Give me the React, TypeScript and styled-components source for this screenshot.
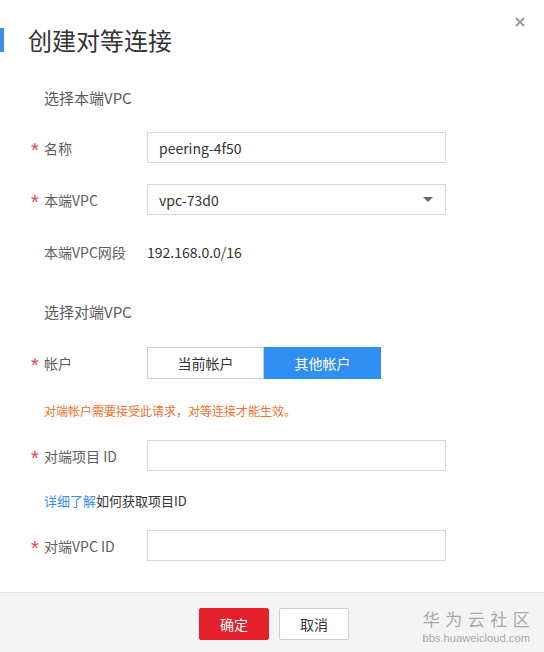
import React from "react";
import styled, { createGlobalStyle } from "styled-components";

const Global = createGlobalStyle`
  html, body { margin: 0; padding: 0; background: #fff; }
  body { font-family: "Noto Sans CJK SC", "Noto Sans", "Liberation Sans", sans-serif; }
  * { box-sizing: border-box; }
`;

const Page = styled.div`
  position: relative;
  width: 544px;
  height: 652px;
  display: flex;
  flex-direction: column;
  background: #fff;
  overflow: hidden;
`;

const Header = styled.div`
  display: flex;
  align-items: center;
  margin-top: 28px;
  height: 24px;
`;

const Bar = styled.div`
  width: 4px;
  height: 24px;
  background: #3a8ee6;
`;

const Title = styled.h1`
  margin: 0 0 0 24px;
  font-size: 24px;
  line-height: 24px;
  font-weight: 400;
  color: #333;
`;

const Close = styled.button`
  position: absolute;
  top: 14px;
  right: 16px;
  width: 16px;
  height: 16px;
  padding: 0;
  border: none;
  background: none;
  display: flex;
  align-items: center;
  justify-content: center;
`;

const Body = styled.div`
  display: flex;
  flex-direction: column;
  padding-left: 31px;
  flex: 1;
`;

const SectionTitle = styled.div<{ $mt: number }>`
  margin-top: ${(p) => p.$mt}px;
  padding-left: 13px;
  font-size: 15px;
  line-height: 20px;
  color: #5a5a5a;
`;

const Row = styled.div<{ $mt: number }>`
  margin-top: ${(p) => p.$mt}px;
  display: flex;
  align-items: center;
`;

const Label = styled.div`
  width: 116px;
  display: flex;
  align-items: center;
  font-size: 14px;
  line-height: 20px;
  color: #5e5e5e;
`;

const Star = styled.span<{ $show: boolean }>`
  width: 13px;
  height: 20px;
  padding-top: 2px;
  color: #e84545;
  font-family: "Liberation Sans", sans-serif;
  font-size: 20px;
  line-height: 20px;
  visibility: ${(p) => (p.$show ? "visible" : "hidden")};
`;

const Input = styled.div`
  width: 299px;
  height: 31px;
  border: 1px solid #d6d6d6;
  padding: 0 12px 0 11px;
  display: flex;
  align-items: center;
  justify-content: space-between;
  font-size: 14px;
  color: #333;
  background: #fff;
`;

const Value = styled.div`
  font-size: 14px;
  line-height: 20px;
  color: #333;
`;

const Toggle = styled.div`
  display: flex;
  height: 32px;
`;

const ToggleItem = styled.div<{ $active: boolean }>`
  width: 117px;
  height: 32px;
  display: flex;
  align-items: center;
  justify-content: center;
  font-size: 14px;
  color: ${(p) => (p.$active ? "#fff" : "#333")};
  background: ${(p) => (p.$active ? "#2f8ff2" : "#fff")};
  border: 1px solid ${(p) => (p.$active ? "#2f8ff2" : "#cfcfcf")};
`;

const Note = styled.div<{ $mt: number }>`
  margin-top: ${(p) => p.$mt}px;
  padding-left: 13px;
  font-size: 12px;
  line-height: 20px;
  color: #f0702a;
`;

const Help = styled.div<{ $mt: number }>`
  margin-top: ${(p) => p.$mt}px;
  padding-left: 13px;
  font-size: 13px;
  line-height: 20px;
  color: #333;
`;

const Link = styled.a`
  color: #3a8ee6;
  text-decoration: none;
`;

const Footer = styled.div`
  height: 60px;
  background: #f4f4f4;
  border-top: 1px solid #e6e6e6;
  display: flex;
  align-items: flex-start;
  padding: 15px 0 0 199px;
  gap: 10px;
`;

const Button = styled.button<{ $primary?: boolean }>`
  width: 70px;
  height: 32px;
  font-family: inherit;
  font-size: 14px;
  border: 1px solid ${(p) => (p.$primary ? "#e3202c" : "#cfcfcf")};
  background: ${(p) => (p.$primary ? "#e3202c" : "#fff")};
  color: ${(p) => (p.$primary ? "#fff" : "#333")};
  border-radius: 2px;
  padding: 0;
`;

const Watermark = styled.div`
  position: absolute;
  right: 14px;
  bottom: 7px;
  display: flex;
  flex-direction: column;
  align-items: center;
  color: #a8a8a8;
`;

const WmTitle = styled.div`
  font-size: 17px;
  line-height: 18px;
  letter-spacing: 5.5px;
  margin-right: -5.5px;
`;

const WmUrl = styled.div`
  font-family: "Liberation Sans", sans-serif;
  font-size: 11.2px;
  line-height: 14px;
  margin-top: 3px;
`;

export default function App() {
  return (
    <Page>
      <Global />
      <Header>
        <Bar />
        <Title>创建对等连接</Title>
      </Header>
      <Close aria-label="close">
        <svg width="10" height="10" viewBox="0 0 10 10">
          <path d="M1 1L9 9M9 1L1 9" stroke="#999" strokeWidth="2" />
        </svg>
      </Close>
      <Body>
        <SectionTitle $mt={36}>选择本端VPC</SectionTitle>
        <Row $mt={24}>
          <Label><Star $show>*</Star>名称</Label>
          <Input>peering-4f50</Input>
        </Row>
        <Row $mt={21}>
          <Label><Star $show>*</Star>本端VPC</Label>
          <Input>
            vpc-73d0
            <svg width="10" height="6" viewBox="0 0 10 6">
              <path d="M0 0H10L5 5Z" fill="#666" />
            </svg>
          </Input>
        </Row>
        <Row $mt={27}>
          <Label><Star $show={false}>*</Star>本端VPC网段</Label>
          <Value>192.168.0.0/16</Value>
        </Row>
        <SectionTitle $mt={40}>选择对端VPC</SectionTitle>
        <Row $mt={25}>
          <Label><Star $show>*</Star>帐户</Label>
          <Toggle>
            <ToggleItem $active={false}>当前帐户</ToggleItem>
            <ToggleItem $active>其他帐户</ToggleItem>
          </Toggle>
        </Row>
        <Note $mt={22}>对端帐户需要接受此请求，对等连接才能生效。</Note>
        <Row $mt={19}>
          <Label><Star $show>*</Star>对端项目 ID</Label>
          <Input />
        </Row>
        <Help $mt={20}>
          <Link href="#">详细了解</Link>如何获取项目ID
        </Help>
        <Row $mt={19}>
          <Label><Star $show>*</Star>对端VPC ID</Label>
          <Input />
        </Row>
      </Body>
      <Footer>
        <Button $primary>确定</Button>
        <Button>取消</Button>
      </Footer>
      <Watermark>
        <WmTitle>华为云社区</WmTitle>
        <WmUrl>bbs.huaweicloud.com</WmUrl>
      </Watermark>
    </Page>
  );
}
